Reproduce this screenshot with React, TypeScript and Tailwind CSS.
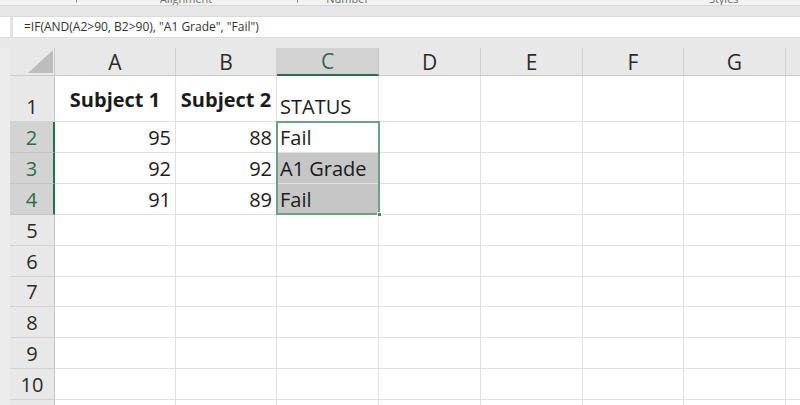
import React from "react";

const colWidths = [121, 101, 102, 102, 102, 101, 102, 102];
const letters = ["A", "B", "C", "D", "E", "F", "G", "H"];
const rowHeights = [46, 31, 31, 31, 31, 31, 30, 31, 31, 31, 31];

type Cell = { t: string; kind: "bold" | "num" | "text" | "status" };

const data: Record<number, (Cell | null)[]> = {
  1: [
    { t: "Subject 1", kind: "bold" },
    { t: "Subject 2", kind: "bold" },
    { t: "STATUS", kind: "status" },
  ],
  2: [
    { t: "95", kind: "num" },
    { t: "88", kind: "num" },
    { t: "Fail", kind: "text" },
  ],
  3: [
    { t: "92", kind: "num" },
    { t: "92", kind: "num" },
    { t: "A1 Grade", kind: "text" },
  ],
  4: [
    { t: "91", kind: "num" },
    { t: "89", kind: "num" },
    { t: "Fail", kind: "text" },
  ],
};

const font = { fontFamily: '"Open Sans", "Noto Sans", sans-serif' };

function DataCell({ cell, row, col }: { cell: Cell | null; row: number; col: number }) {
  const gray = col === 2 && (row === 3 || row === 4);
  const base =
    "border-r border-b border-[#e0e0e0] overflow-visible whitespace-nowrap text-[20px] leading-[20px] text-[#1b1b1b] flex";
  const bg = gray ? "bg-[#c6c6c6]" : "bg-white";
  if (!cell) return <div className={`${base} ${bg}`} />;
  if (cell.kind === "bold")
    return (
      <div className={`${base} ${bg} items-center justify-center font-bold pt-[2px]`}>
        {cell.t}
      </div>
    );
  if (cell.kind === "num")
    return (
      <div className={`${base} ${bg} items-end justify-end pr-[4px] pb-[4px]`}>{cell.t}</div>
    );
  return (
    <div className={`${base} ${bg} items-end justify-start pl-[3px] pb-[4px]`}>{cell.t}</div>
  );
}

export default function App() {
  return (
    <div className="w-[800px] h-[405px] overflow-hidden bg-[#e6e6e6] flex flex-col" style={font}>
      {/* ribbon group labels (cut off) */}
      <div className="h-[6px] shrink-0 bg-[#f3f3f3] overflow-hidden flex items-end text-[11px] leading-[11px] text-[#6b6b6b] pb-[1px] border-b border-[#d6d6d6]">
        <svg className="ml-[71px] w-[6px] h-[6px] mb-[1px]" viewBox="0 0 6 6">
          <path d="M0.5 0.5 H5.5 V5.5" fill="none" stroke="#8a8a8a" strokeWidth="1" />
        </svg>
        <span className="ml-[83px]">Alignment</span>
        <svg className="ml-[80px] w-[6px] h-[6px] mb-[1px]" viewBox="0 0 6 6">
          <path d="M0.5 0.5 H5.5 V5.5" fill="none" stroke="#8a8a8a" strokeWidth="1" />
        </svg>
        <span className="ml-[28px]">Number</span>
        <span className="ml-[340px]">Styles</span>
      </div>
      {/* gray band */}
      <div className="h-[11px] shrink-0 bg-[#e7e7e7] border-b border-[#dadada]" />
      {/* formula bar */}
      <div className="h-[20px] shrink-0 flex bg-[#e6e6e6]">
        <div className="w-[10px] bg-white" />
        <div className="w-[3px] bg-[#e2e2e2]" />
        <div className="flex-1 bg-white flex items-center pl-[11px] text-[12px] text-[#333] whitespace-nowrap">
          =IF(AND(A2&gt;90, B2&gt;90), "A1 Grade", "Fail")
        </div>
      </div>
      {/* gap */}
      <div className="h-[11px] shrink-0 bg-[#e8e8e8] border-t border-[#dedede]" />
      {/* grid */}
      <div className="relative flex-1">
        <div className="grid grid-cols-[10px_45px_121px_101px_102px_102px_102px_101px_102px_102px] grid-rows-[28px_46px_31px_31px_31px_31px_31px_30px_31px_31px_31px_31px] w-[1010px]">
          {/* header row */}
          <div className="bg-[#ececec]" />
          <div className="bg-[#e8e8e8] border-r border-b border-[#c9c9c9] relative">
            <svg className="absolute left-[18px] top-[2px] w-[25px] h-[23px]" viewBox="0 0 25 23">
              <polygon points="0,23 25,23 25,0" fill="#bdbdbd" />
            </svg>
          </div>
          {letters.map((l) =>
            l === "C" ? (
              <div
                key={l}
                className="bg-[#d3d3d3] border-r border-[#c4c4c4] border-b-2 border-b-[#217346] flex items-center justify-center text-[21px] leading-[21px] text-[#2a6e48] pt-[1px]"
              >
                {l}
              </div>
            ) : (
              <div
                key={l}
                className="bg-[#e8e8e8] border-r border-b border-r-[#d2d2d2] border-b-[#c9c9c9] flex items-center justify-center text-[21px] leading-[21px] text-[#2b2b2b] pt-[1px]"
              >
                {l}
              </div>
            )
          )}
          {rowHeights.map((_, ri) => {
            const row = ri + 1;
            const hi = row >= 2 && row <= 4;
            const cells = data[row] || [];
            return (
              <React.Fragment key={row}>
                <div className="bg-[#ececec]" />
                <div
                  className={
                    hi
                      ? "bg-[#d3d3d3] border-b border-[#c4c4c4] border-r-2 border-r-[#217346] flex items-end justify-center text-[20px] leading-[20px] text-[#2a6e48] pb-[4px]"
                      : "bg-[#e8e8e8] border-b border-r border-b-[#d2d2d2] border-r-[#c6c6c6] flex items-end justify-center text-[20px] leading-[20px] text-[#2b2b2b] pb-[4px]"
                  }
                >
                  {row}
                </div>
                {colWidths.map((_, ci) => (
                  <DataCell key={ci} cell={cells[ci] || null} row={row} col={ci} />
                ))}
              </React.Fragment>
            );
          })}
        </div>
        {/* selection C2:C4 */}
        <div className="absolute left-[276px] top-[73px] w-[104px] h-[94px] border-2 border-[#6aa386] pointer-events-none" />
        <div className="absolute left-[377px] top-[164px] w-[5px] h-[5px] bg-[#3f8a63] border border-white pointer-events-none" />
      </div>
    </div>
  );
}
